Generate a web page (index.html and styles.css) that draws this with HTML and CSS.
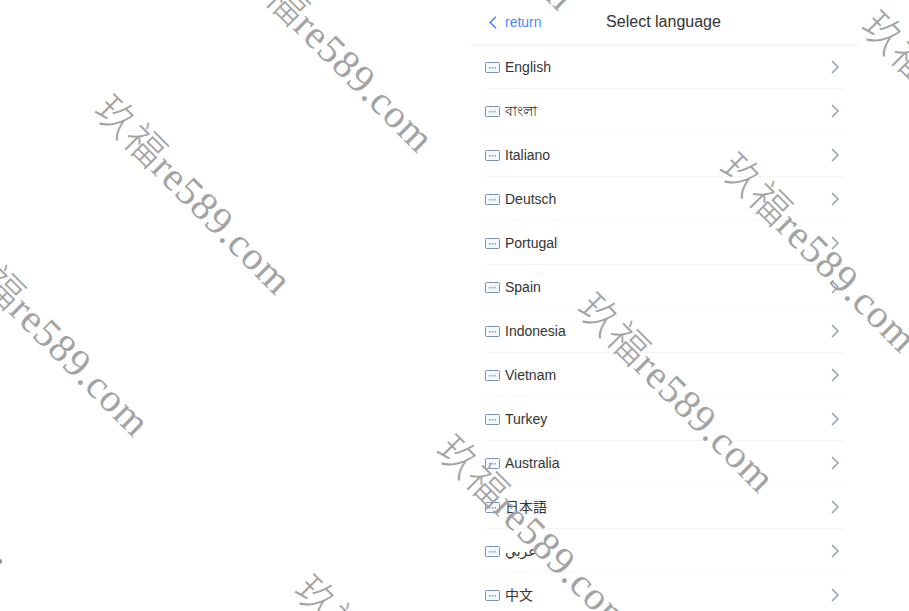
FILE: index.html
```html
<!DOCTYPE html>
<html lang="en">
    <head>
        <meta charset="UTF-8" />
        <meta name="viewport" content="width=device-width, initial-scale=1.0" />
        <title>Select language</title>
        <link rel="stylesheet" href="styles.css">
    </head>
    <body>
        <svg class="defs" width="0" height="0" aria-hidden="true">
            <symbol id="msg" viewBox="0 0 15 11">
                <rect x="0.5" y="0.5" width="14" height="10" rx="1" fill="#f4f9fe" stroke="#7b93ae" />
                <rect x="4" y="5" width="1.5" height="1.5" fill="#8d9db0" />
                <rect x="6.75" y="5" width="1.5" height="1.5" fill="#8d9db0" />
                <rect x="9.5" y="5" width="1.5" height="1.5" fill="#8d9db0" />
            </symbol>
            <symbol id="next" viewBox="0 0 8 14">
                <path d="M1 1l6 6-6 6" fill="none" stroke="#8f9bab" stroke-width="1.4" />
            </symbol>
        </svg>
        <div class="panel">
            <div class="top">
                <a class="back">
                    <svg width="8" height="13" viewBox="0 0 8 13"><path d="M7 .7L1.2 6.5 7 12.3" fill="none" stroke="#4d84ff" stroke-width="1.6" /></svg>
                    <span>return</span>
                </a>
                <div class="title">Select language</div>
            </div>
            <div class="langs">
                <div class="lang"><svg class="msg"><use href="#msg" /></svg><span>English</span><svg class="next"><use href="#next" /></svg></div>
                <div class="lang"><svg class="msg"><use href="#msg" /></svg><span class="bengali">বাংলা</span><svg class="next"><use href="#next" /></svg></div>
                <div class="lang"><svg class="msg"><use href="#msg" /></svg><span>Italiano</span><svg class="next"><use href="#next" /></svg></div>
                <div class="lang"><svg class="msg"><use href="#msg" /></svg><span>Deutsch</span><svg class="next"><use href="#next" /></svg></div>
                <div class="lang"><svg class="msg"><use href="#msg" /></svg><span>Portugal</span><svg class="next"><use href="#next" /></svg></div>
                <div class="lang"><svg class="msg"><use href="#msg" /></svg><span>Spain</span><svg class="next"><use href="#next" /></svg></div>
                <div class="lang"><svg class="msg"><use href="#msg" /></svg><span>Indonesia</span><svg class="next"><use href="#next" /></svg></div>
                <div class="lang"><svg class="msg"><use href="#msg" /></svg><span>Vietnam</span><svg class="next"><use href="#next" /></svg></div>
                <div class="lang"><svg class="msg"><use href="#msg" /></svg><span>Turkey</span><svg class="next"><use href="#next" /></svg></div>
                <div class="lang"><svg class="msg"><use href="#msg" /></svg><span>Australia</span><svg class="next"><use href="#next" /></svg></div>
                <div class="lang"><svg class="msg"><use href="#msg" /></svg><span class="cjk" lang="ja">日本語</span><svg class="next"><use href="#next" /></svg></div>
                <div class="lang"><svg class="msg"><use href="#msg" /></svg><span class="arabic" lang="ar">عربي</span><svg class="next"><use href="#next" /></svg></div>
                <div class="lang"><svg class="msg"><use href="#msg" /></svg><span class="cjk" lang="zh">中文</span><svg class="next"><use href="#next" /></svg></div>
            </div>
        </div>
        <div class="marks">
            <span class="mark m1">玖福re589.com</span>
            <span class="mark m2">玖福re589.com</span>
            <span class="mark m3">玖福re589.com</span>
            <span class="mark m4">玖福re589.com</span>
            <span class="mark m5">玖福re589.com</span>
            <span class="mark m6">玖福re589.com</span>
            <span class="mark m7">玖福re589.com</span>
            <span class="mark m8">玖福re589.com</span>
            <span class="mark m9">玖福re589.com</span>
            <i class="speck"></i>
        </div>
    </body>
</html>
```
FILE: styles.css
```css
html {
    height: 100%;
    overflow: hidden;
}
body {
    margin: 0;
    background: #fff;
    font-family: "Liberation Sans", "Noto Sans", "Noto Sans CJK SC", sans-serif;
    color: #333;
}
.defs {
    position: absolute;
}
.panel {
    width: 389px;
    margin-left: 470px;
}
.top {
    display: grid;
    grid-template-columns: 1fr auto 1fr;
    align-items: center;
    box-sizing: border-box;
    height: 46px;
    padding: 0 21px 0 19px;
    border-bottom: 2px solid #f5f5f5;
}
.back {
    display: flex;
    align-items: center;
    gap: 8px;
    font-size: 14px;
    color: #4d88ff;
}
.title {
    font-size: 16px;
    grid-column: 2;
}
.langs {
    padding: 0 15px;
}
.lang {
    display: flex;
    align-items: center;
    height: 43px;
    border-bottom: 1px solid #f5f5f5;
    font-size: 14px;
}
.lang:first-child {
    height: 42px;
}
.lang span {
    flex: 1;
}
.bengali {
    padding-top: 2px;
}
.cjk {
    padding-bottom: 2px;
}
.lang span[lang="ja"] {
    font-family: "Noto Sans CJK JP", sans-serif;
}
.lang span[lang="zh"] {
    font-family: "Noto Sans CJK SC", sans-serif;
}
.arabic {
    font-family: "DejaVu Sans", sans-serif;
    text-align: left;
}
.msg {
    width: 15px;
    height: 11px;
    margin-top: 1px;
    margin-right: 5px;
}
.next {
    width: 8px;
    height: 14px;
    margin-right: 5px;
}
.marks {
    position: absolute;
    inset: 0;
    overflow: hidden;
    pointer-events: none;
}
.mark {
    position: absolute;
    transform: rotate(45deg);
    transform-origin: 0 0;
    white-space: nowrap;
    line-height: 1;
    letter-spacing: 1px;
    font-family: "Liberation Serif", "Noto Sans CJK SC", serif;
    font-size: 40px;
    font-weight: 300;
    color: #a3a3a3;
}
.m1 { left: 115px; top: 89px; }
.m2 { left: 257px; top: -53px; }
.m3 { left: -27px; top: 231px; }
.m4 { left: 457px; top: 429px; }
.m5 { left: 598px; top: 287px; }
.m6 { left: 740px; top: 147px; }
.m7 { left: 882px; top: 5px; }
.m8 { left: 315px; top: 569px; }
.m9 { left: 398px; top: -195px; }
.speck {
    position: absolute;
    left: -3px;
    top: 559px;
    width: 5px;
    height: 5px;
    border-radius: 50%;
    background: #8a8a8a;
}
```
